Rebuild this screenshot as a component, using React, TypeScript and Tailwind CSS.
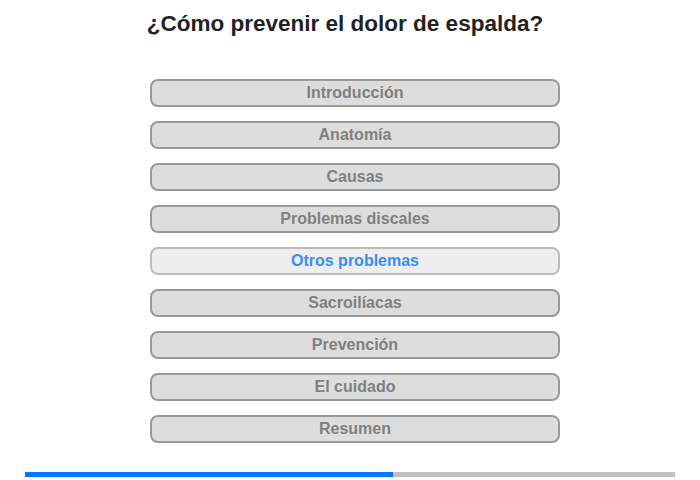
const sections = [
  "Introducción",
  "Anatomía",
  "Causas",
  "Problemas discales",
  "Otros problemas",
  "Sacroilíacas",
  "Prevención",
  "El cuidado",
  "Resumen",
];

const active = "Otros problemas";

export default function App() {
  return (
    <div className="w-[700px] h-[480px] bg-white flex flex-col items-center font-['Liberation_Sans',Arial,sans-serif]">
      <h1 className="mt-[12px] pr-[10px] text-[22.5px] leading-[24px] font-bold text-[#222]">
        ¿Cómo prevenir el dolor de espalda?
      </h1>

      {/* menu */}
      <div className="mt-[43px] ml-[10px] flex flex-col gap-[14px]">
        {sections.map((s) => {
          const on = s === active;
          return (
            <div
              key={s}
              className={
                on
                  ? "w-[410px] h-[28px] rounded-[8px] border-2 border-[#bbbbbb] bg-[#eeeeee] flex items-center justify-center text-[16px] font-bold text-[#3b8cf7]"
                  : "w-[410px] h-[28px] rounded-[8px] border-2 border-[#999999] bg-[#dddddd] flex items-center justify-center text-[16px] font-bold text-[#808080]"
              }
            >
              {s}
            </div>
          );
        })}
      </div>

      {/* progress */}
      <div className="mt-[29px] w-[650px] h-[5px] bg-[#c0c0c0] flex">
        <div className="h-full bg-[#0077ff]" style={{ width: "368px" }} />
      </div>
    </div>
  );
}
